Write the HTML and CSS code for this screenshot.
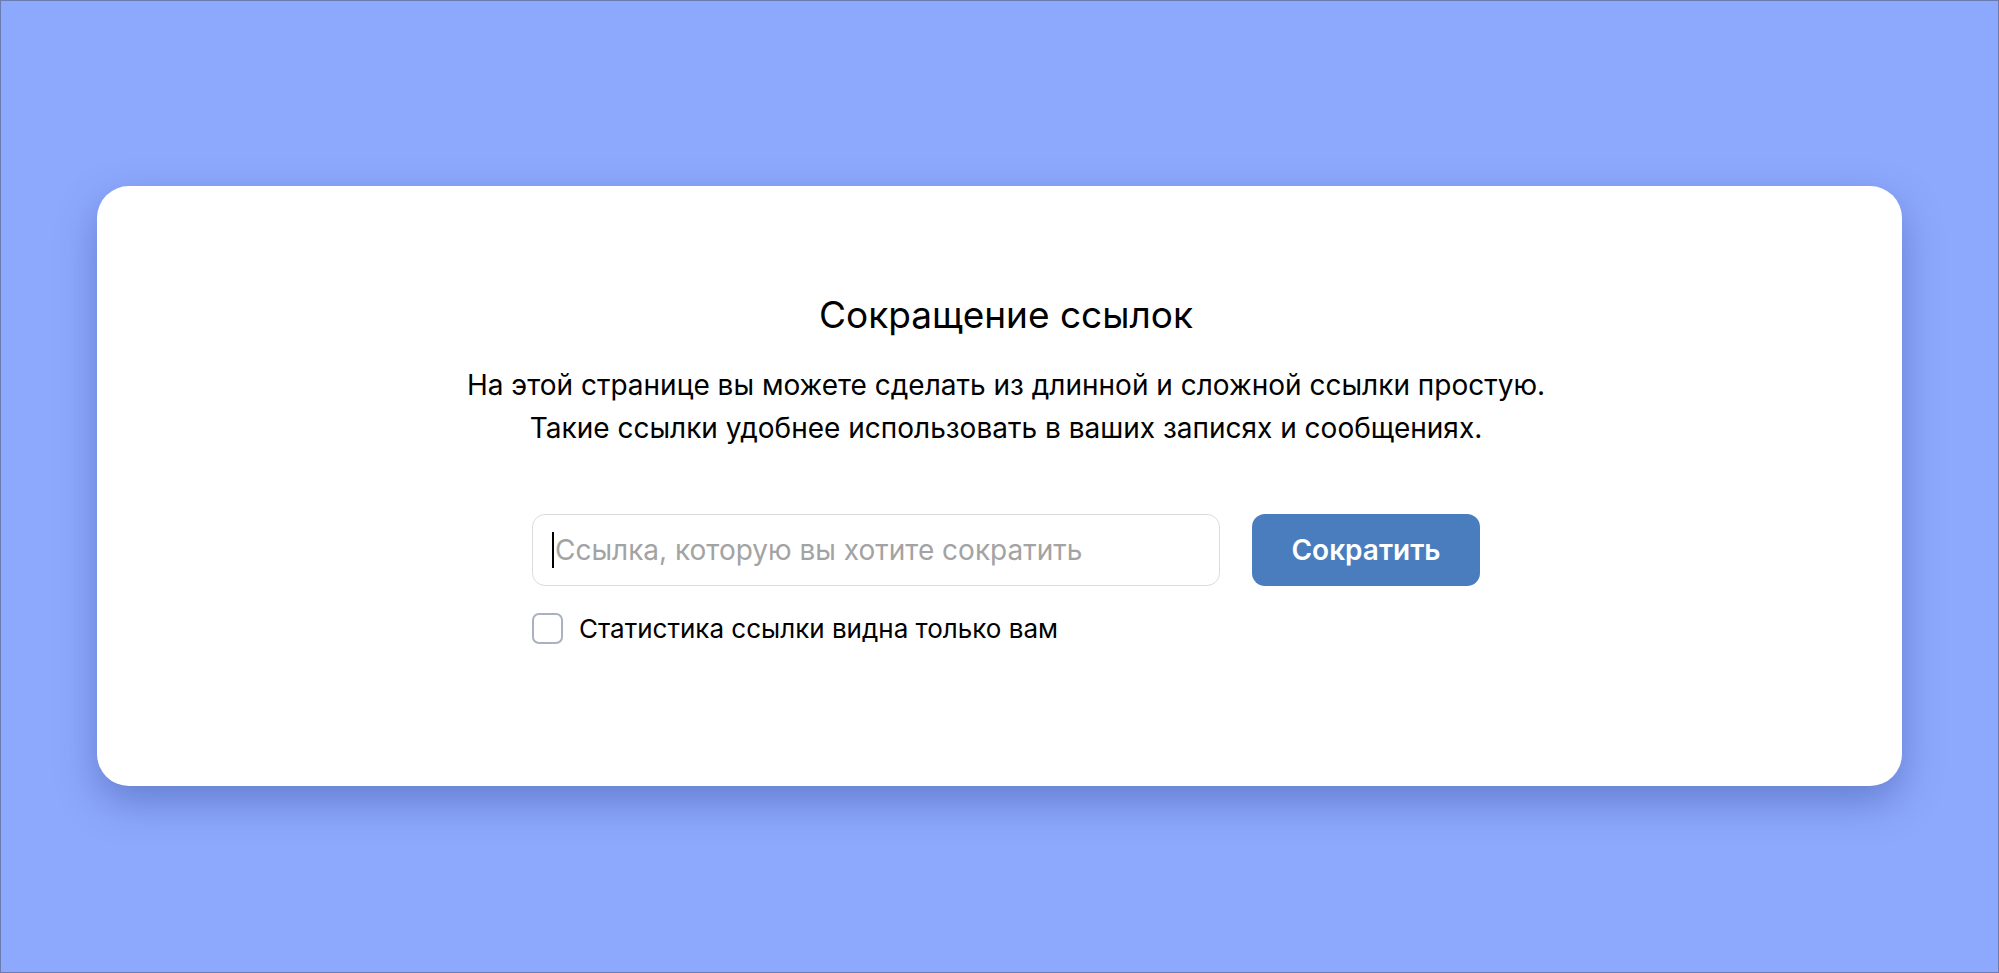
FILE: index.html
```html
<!DOCTYPE html>
<html lang="ru">
<head>
<meta charset="utf-8">
<title>Сокращение ссылок</title>
<link rel="stylesheet" href="styles.css">
</head>
<body>
<div class="page">
  <main class="card">
    <h1 class="title">Сокращение ссылок</h1>
    <p class="desc">На этой странице вы можете сделать из длинной и сложной ссылки простую.<br>Такие ссылки удобнее использовать в ваших записях и сообщениях.</p>
    <form class="form">
      <div class="row">
        <div class="field">
          <input class="input" type="text" placeholder="Ссылка, которую вы хотите сократить">
          <span class="caret"></span>
        </div>
        <button class="btn" type="button">Сократить</button>
      </div>
      <label class="check">
        <span class="box"></span>
        <span class="check-label">Статистика ссылки видна только вам</span>
      </label>
    </form>
  </main>
</div>
</body>
</html>
```

FILE: styles.css
```css
html, body {
  margin: 0;
  padding: 0;
}
body {
  width: 1999px;
  height: 973px;
  box-sizing: border-box;
  background: #8da9fe;
  border: 1px solid #6b7cae;
  font-family: Inter, "Noto Sans", "Liberation Sans", sans-serif;
  color: #000;
  overflow: hidden;
}
.page {
  padding: 185px 0 0 96px;
}
.card {
  width: 1805px;
  height: 600px;
  box-sizing: border-box;
  background: #fff;
  border-radius: 32px;
  box-shadow: 0 16px 40px rgba(30, 45, 120, 0.35);
  padding: 109px 0 0 13px;
  display: flex;
  flex-direction: column;
  align-items: center;
}
.title {
  margin: 0;
  font-size: 37px;
  line-height: 40px;
  font-weight: 400;
}
.desc {
  margin: 29px 0 0;
  font-size: 28px;
  line-height: 43px;
  text-align: center;
}
.form {
  margin-top: 64px;
  width: 948px;
}
.row {
  display: flex;
  gap: 32px;
}
.field {
  position: relative;
  width: 688px;
}
.input {
  width: 100%;
  height: 72px;
  box-sizing: border-box;
  border: 1.5px solid #dcdcdc;
  border-radius: 13px;
  padding: 0 0 0 22px;
  font-family: inherit;
  font-size: 28px;
  color: #000;
  outline: none;
  background: #fff;
}
.input::placeholder {
  color: #a3a3a3;
}
.caret {
  position: absolute;
  left: 20px;
  top: 18px;
  width: 2px;
  height: 36px;
  background: #000;
}
.btn {
  width: 228px;
  height: 72px;
  border: none;
  border-radius: 13px;
  background: #4a7dbe;
  color: #fff;
  font-family: inherit;
  font-size: 28px;
  font-weight: 600;
  padding: 0;
}
.check {
  display: flex;
  align-items: center;
  gap: 16px;
  margin-top: 27px;
}
.box {
  width: 31px;
  height: 31px;
  box-sizing: border-box;
  border: 2px solid #a9b2c0;
  border-radius: 7px;
  background: #fff;
}
.check-label {
  font-size: 26px;
  line-height: 31px;
}
```
